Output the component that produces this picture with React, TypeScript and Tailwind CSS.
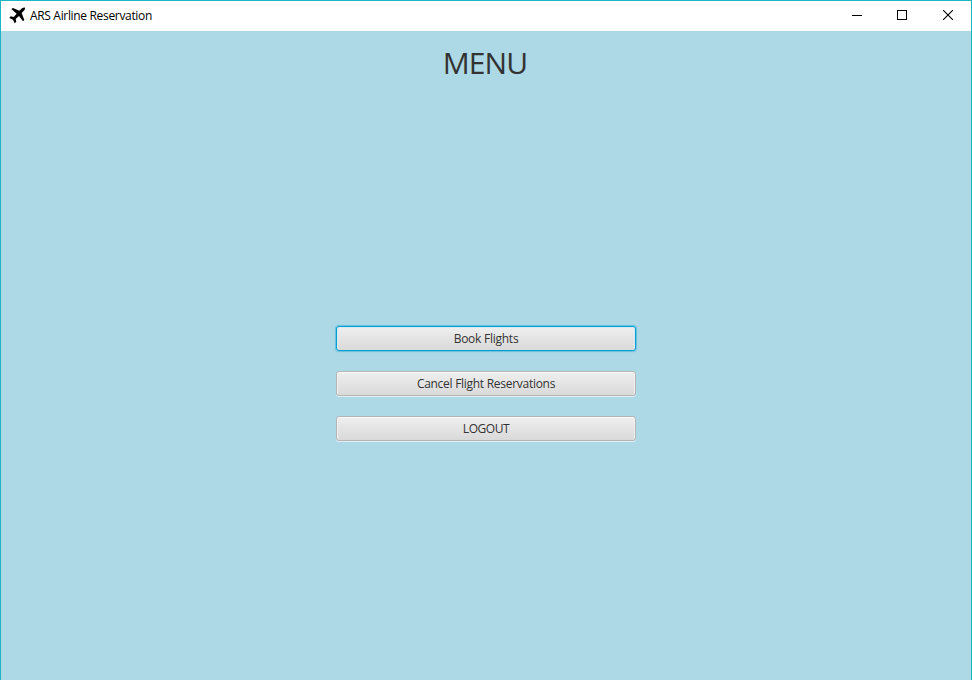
import React from "react";

const fontClass = "font-['Segoe_UI','Open_Sans','Noto_Sans',sans-serif]";

function PlaneIcon() {
  return (
    <svg width="17" height="17" viewBox="0 0 51 51" className="mb-0.5 text-black">
      <path
        fill="currentColor"
        d="M7 6 L12 3 L31 11 L39 4 Q44 1 48 2 Q49 6 46 10 L38 18 L46 39 L42 43 L30 27 L20 36 L22 44 L17 49 L12 38 L1 33 L5 28 L14 30 L23 20 Z"
      />
    </svg>
  );
}

function TitleBar() {
  return (
    <header className="flex h-[30px] shrink-0 items-center justify-between bg-white">
      <div className="flex items-center pl-2">
        <PlaneIcon />
        <h1 className="ml-1 whitespace-nowrap text-[12px] leading-4 tracking-[-0.33px] text-black">
          ARS Airline Reservation
        </h1>
      </div>
      <div className="flex h-full">
        <button aria-label="Minimize" className="flex w-[45px] items-center justify-center">
          <span className="mb-px h-px w-[10px] bg-black" />
        </button>
        <button aria-label="Maximize" className="flex w-[46px] items-center justify-center">
          <span className="mb-[2px] h-[10px] w-[10px] border border-black" />
        </button>
        <button aria-label="Close" className="flex w-[46px] items-center justify-center pr-px">
          <svg width="10" height="10" viewBox="0 0 10 10" className="mb-[2px]">
            <path d="M0 0 L10 10 M10 0 L0 10" stroke="#000" strokeWidth="1.1" />
          </svg>
        </button>
      </div>
    </header>
  );
}

function MenuButton({ label, focused = false, tracking }: { label: string; focused?: boolean; tracking: string }) {
  const look = focused
    ? "border-[#039ed3] shadow-[0_0_1px_1px_rgba(3,158,211,0.4),inset_0_1px_0_#d9ebf2,inset_1px_0_0_#d9ebf2,inset_-1px_0_0_#d9ebf2]"
    : "border-[#b5b5b5] shadow-[0_1px_0_#e2f0f5,inset_0_1px_0_#fafafa,inset_1px_0_0_#f0f0f0,inset_-1px_0_0_#f0f0f0]";
  return (
    <button
      className={`flex h-[25px] w-[300px] items-center justify-center rounded-[3px] border bg-linear-to-b from-[#efefef] to-[#d9d9d9] text-[12px] leading-4 text-[#333] ${look} ${tracking}`}
    >
      {label}
    </button>
  );
}

export default function App() {
  return (
    <div className={`flex h-[680px] w-[972px] flex-col overflow-hidden border-x border-t border-[#1cb5c4] bg-[#add8e6] ${fontClass}`}>
      <TitleBar />
      <main className="flex flex-col items-center">
        <h2 className="mt-[12px] pr-[2px] text-[30px] leading-[40px] tracking-[-0.9px] text-[#333]">MENU</h2>
        <nav className="mt-[243px] flex flex-col gap-5">
          <MenuButton label="Book Flights" focused tracking="tracking-[-0.25px]" />
          <MenuButton label="Cancel Flight Reservations" tracking="tracking-[-0.28px]" />
          <MenuButton label="LOGOUT" tracking="tracking-[-0.45px]" />
        </nav>
      </main>
    </div>
  );
}
